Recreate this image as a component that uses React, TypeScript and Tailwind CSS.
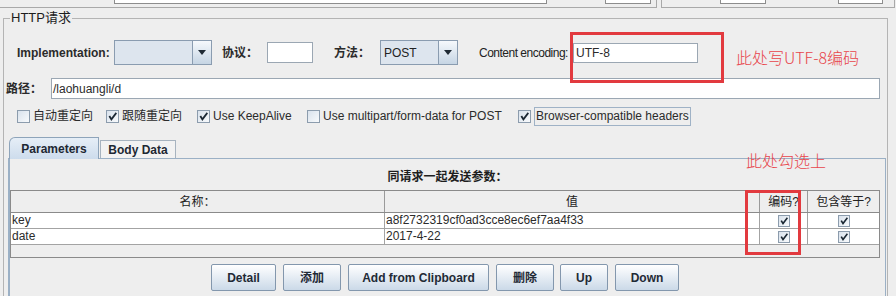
import React from 'react';

function Check({ size = 13 }: { size?: number }) {
  return (
    <svg width={size - 4} height={size - 4} viewBox="0 0 9 9">
      <path d="M1.8 4.8 L3.4 7.4 L7.8 1.6" stroke="#1b2733" strokeWidth="1.8" fill="none" strokeLinecap="square" />
    </svg>
  );
}

function CheckBox({ checked, small }: { checked?: boolean; small?: boolean }) {
  return (
    <span
      className={
        (small ? 'h-[12px] w-[12px] ' : 'h-[13px] w-[13px] ') +
        'flex shrink-0 items-center justify-center border border-[#8c9cad] bg-linear-to-br from-[#d9e2ec] to-[#f8fafc]'
      }
    >
      {checked && <Check size={small ? 12 : 13} />}
    </span>
  );
}

function Combo({ className, value }: { className: string; value?: string }) {
  return (
    <div className={'flex h-[25px] shrink-0 border border-[#8a9cb0] ' + className}>
      <div className="flex flex-1 items-center bg-[#dde5ee] pl-[3px] text-[12px] text-[#222]">{value}</div>
      <div className="flex w-[19px] items-center justify-center border-l border-[#8a9cb0] bg-linear-to-b from-[#f6f9fc] to-[#c6d5e4]">
        <svg width="8" height="5" viewBox="0 0 8 5">
          <path d="M0 0 H8 L4 5 Z" fill="#1f2a35" />
        </svg>
      </div>
    </div>
  );
}

function Option({ checked, label, className, focus }: { checked?: boolean; label: string; className: string; focus?: boolean }) {
  return (
    <div className={'flex shrink-0 items-center gap-[3px] whitespace-nowrap ' + className}>
      <CheckBox checked={checked} />
      <span className={focus ? 'border border-[#9fb2c6] px-[1px] leading-[17px]' : 'leading-[17px]'}>{label}</span>
    </div>
  );
}

const buttons = [
  { label: 'Detail', w: 'w-[65px]', ml: 'ml-[201px]' },
  { label: '添加', w: 'w-[58px]', ml: 'ml-[7px]' },
  { label: 'Add from Clipboard', w: 'w-[141px]', ml: 'ml-[7px]' },
  { label: '删除', w: 'w-[58px]', ml: 'ml-[7px]' },
  { label: 'Up', w: 'w-[48px]', ml: 'ml-[6px]' },
  { label: 'Down', w: 'w-[64px]', ml: 'ml-[7px]' },
];

const rows = [
  { name: 'key', value: 'a8f2732319cf0ad3cce8ec6ef7aa4f33' },
  { name: 'date', value: '2017-4-22' },
];

export default function App() {
  return (
    <div className="relative h-[296px] w-[896px] overflow-hidden bg-[#eeeeee] font-['Liberation_Sans','Noto_Sans_CJK_SC',sans-serif] text-[12px] text-[#2b2b2b]">
      {/* previous panel edges */}
      <div className="flex h-[8px] items-start">
        <div className="flex h-[8px] w-[657px] items-start border-r border-b border-[#a9a9a9]">
          <div className="ml-[114px] h-[4px] w-[433px] border-x border-b border-[#8d8d8d] bg-white" />
          <div className="ml-[58px] h-[4px] w-[46px] border-x border-b border-[#8d8d8d] bg-white" />
        </div>
        <div className="ml-[4px] flex h-[8px] w-[234px] items-start border-x border-b border-[#a9a9a9]">
          <div className="ml-[58px] h-[4px] w-[46px] border-x border-b border-[#8d8d8d] bg-white" />
          <div className="ml-[72px] h-[4px] w-[45px] border-x border-b border-[#8d8d8d] bg-white" />
        </div>
      </div>

      <fieldset className="mt-[2px] ml-[3px] h-[300px] w-[885px] border border-[#b4b4b4]">
        <legend className="ml-[6px] px-[1px] text-[13px] leading-[16px] text-[#1c1c1c]">HTTP请求</legend>

        {/* row 1 */}
        <div className="mt-[14px] flex h-[25px] items-center pl-[13px] whitespace-nowrap">
          <span className="w-[97px] shrink-0 font-bold">Implementation:</span>
          <Combo className="w-[98px]" />
          <span className="ml-[10px] w-[45px] shrink-0 font-bold">协议：</span>
          <div className="h-[21px] w-[46px] shrink-0 border border-[#9ba7b3] bg-white" />
          <span className="ml-[21px] w-[46px] shrink-0 font-bold">方法：</span>
          <Combo className="w-[78px]" value="POST" />
          <span className="ml-[21px] w-[94px] shrink-0 tracking-[-0.5px] text-[#222]">Content encoding:</span>
          <div className="flex h-[20px] w-[125px] shrink-0 items-center border border-[#9ba7b3] bg-white pl-[2px]">UTF-8</div>
        </div>

        {/* row 2 */}
        <div className="mt-[13px] flex h-[21px] items-center pl-[2px]">
          <span className="w-[45px] shrink-0 font-bold">路径：</span>
          <div className="flex h-[21px] w-[829px] items-center border border-[#9ba7b3] bg-white pl-[1px]">/laohuangli/d</div>
        </div>

        {/* row 3 */}
        <div className="mt-[8px] flex h-[19px] items-center pl-[13px]">
          <Option className="w-[89px]" label="自动重定向" />
          <Option className="w-[91px]" checked label="跟随重定向" />
          <Option className="w-[110px]" checked label="Use KeepAlive" />
          <Option className="w-[211px]" label="Use multipart/form-data for POST" />
          <Option className="" checked focus label="Browser-compatible headers" />
        </div>

        {/* tabs */}
        <div className="mt-[11px] flex h-[21px] items-end pl-[5px]">
          <div className="relative z-10 -mb-px flex h-[22px] w-[90px] items-center justify-center rounded-tl-[6px] border-x border-t border-[#8ea4ba] bg-linear-to-b from-[#e6eef7] to-[#cddcec] font-bold text-[#1e2833]">
            Parameters
          </div>
          <div className="ml-[1px] flex h-[18px] w-[76px] items-center justify-center border-x border-t border-[#a7b3bf] bg-[#f2f2f2] font-bold text-[#1e2833]">
            Body Data
          </div>
        </div>

        <div className="ml-[4px] h-[200px] w-[878px] border-t border-r border-l-2 border-[#9bb0c5] bg-[#eeeeee]">
          <div className="flex h-[31px] items-center justify-center pt-[4px] font-bold text-[#1e1e1e]">同请求一起发送参数：</div>

          <div className="w-[870px] border border-[#8a8a8a]">
            <div className="flex h-[22px] border-b border-[#8a8a8a] bg-[#eeeeee] text-[#222]">
              <div className="flex w-[374px] items-center justify-center border-r border-[#9a9a9a]">名称：</div>
              <div className="flex w-[375px] items-center justify-center border-r border-[#9a9a9a]">值</div>
              <div className="flex w-[48px] items-center justify-center border-r border-[#9a9a9a]">编码?</div>
              <div className="flex flex-1 items-center justify-center">包含等于?</div>
            </div>
            {rows.map((r) => (
              <div key={r.name} className="flex h-[16px] border-b border-[#a3a3a3] bg-white leading-[15px]">
                <div className="w-[374px] border-r border-[#a3a3a3] pl-[1px]">{r.name}</div>
                <div className="w-[375px] border-r border-[#a3a3a3] pl-[1px]">{r.value}</div>
                <div className="flex w-[48px] items-center justify-center border-r border-[#a3a3a3]">
                  <CheckBox checked small />
                </div>
                <div className="flex flex-1 items-center justify-center">
                  <CheckBox checked small />
                </div>
              </div>
            ))}
            <div className="h-[12px]" />
          </div>

          <div className="mt-[6px] flex">
            {buttons.map((b) => (
              <div
                key={b.label}
                className={
                  'flex h-[27px] shrink-0 items-center justify-center rounded-[2px] border border-[#8397ad] bg-linear-to-b from-[#ffffff] to-[#cbd9e8] font-bold text-[#1f2a36] ' +
                  b.w +
                  ' ' +
                  b.ml
                }
              >
                {b.label}
              </div>
            ))}
          </div>
        </div>
      </fieldset>

      {/* annotations */}
      <div className="absolute top-[32px] left-[570px] h-[51px] w-[154px] border-[3px] border-[#e23a3f]" />
      <div className="absolute top-[47px] left-[736px] font-['Noto_Sans_CJK_SC',sans-serif] text-[16px] leading-[20px] font-light text-[#e8454b]">此处写UTF-8编码</div>
      <div className="absolute top-[150px] left-[746px] font-['Noto_Sans_CJK_SC',sans-serif] text-[16px] leading-[20px] font-light text-[#e8454b]">此处勾选上</div>
      <div className="absolute top-[190px] left-[745px] h-[65px] w-[56px] border-[3px] border-[#e23a3f]" />
    </div>
  );
}
